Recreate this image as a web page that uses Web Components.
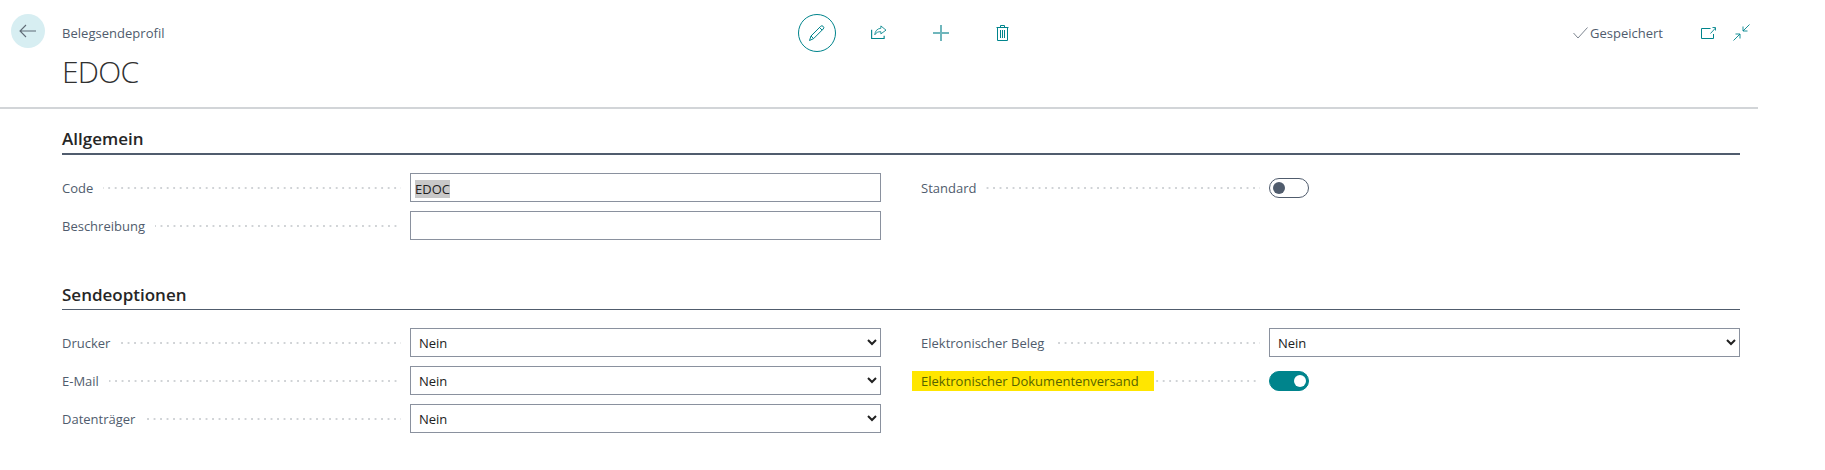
<!DOCTYPE html>
<html lang="de"><head><meta charset="utf-8"><title>EDOC</title>
<style>
html,body{margin:0;background:#fff}
body{font:13px "Open Sans",sans-serif;color:#212121;width:1825px;height:470px;overflow:hidden}
</style></head><body>
<bc-page>
  <bc-header slot="header" caption="Belegsendeprofil" title-text="EDOC"></bc-header>
  <bc-section heading="Allgemein" strong>
    <bc-column>
      <bc-field label="Code"><bc-input value="EDOC"></bc-input></bc-field>
      <bc-field label="Beschreibung"><bc-input></bc-input></bc-field>
    </bc-column>
    <bc-column>
      <bc-field label="Standard"><bc-toggle></bc-toggle></bc-field>
    </bc-column>
  </bc-section>
  <bc-section heading="Sendeoptionen">
    <bc-column>
      <bc-field label="Drucker"><bc-select></bc-select></bc-field>
      <bc-field label="E-Mail"><bc-select></bc-select></bc-field>
      <bc-field label="Datenträger"><bc-select></bc-select></bc-field>
    </bc-column>
    <bc-column>
      <bc-field label="Elektronischer Beleg"><bc-select></bc-select></bc-field>
      <bc-field label="Elektronischer Dokumentenversand" marked><bc-toggle on></bc-toggle></bc-field>
    </bc-column>
  </bc-section>
</bc-page>
<script>
const def=(name,css,html)=>customElements.define(name,class extends HTMLElement{
  connectedCallback(){ if(this.shadowRoot) return;
    const r=this.attachShadow({mode:'open'});
    r.innerHTML='<style>'+css+'</style>'+(typeof html==='function'?html(this):html);
  }
});
const T='#00848c';
def('bc-page',`:host{display:block}
  .body{display:block;padding:0 0 0 62px;width:1678px}`,
  `<slot name="header"></slot><div class="body"><slot></slot></div>`);
const ic=(w,h,vb,inner)=>`<svg width="${w}" height="${h}" viewBox="${vb}" fill="none" stroke="${T}" stroke-width="1">${inner}</svg>`;
def('bc-header',`:host{display:block;height:109px;box-sizing:border-box;border-bottom:2px solid #d2d5d8;width:1758px}
  .row{display:flex;height:107px}
  .back{width:62px;flex:none;padding:14px 0 0 11px;box-sizing:border-box}
  .circle{width:34px;height:34px;border-radius:50%;background:#d7eef2;display:flex;align-items:center;justify-content:center}
  .title{width:736px;flex:none}
  .cap{font-size:13px;line-height:18px;color:#505c6d;margin-top:24px;letter-spacing:.03px}
  h1{margin:12px 0 0;font:300 30px/36px "Open Sans",sans-serif;color:#303030;letter-spacing:-.7px}
  .tools{display:flex;align-items:flex-start;flex:none;width:240px;padding-top:14px;box-sizing:border-box}
  .tool{height:38px;display:flex;align-items:center;justify-content:center;flex:none}
  .tool.edit{width:38px;border-radius:50%;border:1px solid ${T};box-sizing:border-box}
  .tool.sh{margin-left:19px;width:48px;padding-bottom:2px;box-sizing:border-box}
  .tool.pl{width:76px}
  .tool.tr{width:46px}
  .status{margin-left:auto;display:flex;align-items:center;height:38px;margin-top:14px;color:#505c6d;font-size:13px}
  .chk{margin-right:2px}
  .t{width:111px}
  .o{display:block;margin-right:17px}
  .c{display:block;margin-right:8px;margin-top:-1px}
  `,h=>`<div class="row">
   <div class="back"><div class="circle"><svg width="18" height="14" viewBox="0 0 18 14" fill="none" stroke="#5f6b76" stroke-width="1.1"><path d="M17 7H1M7 1 1 7l6 6"/></svg></div></div>
   <div class="title"><div class="cap">${h.getAttribute('caption')}</div><h1>${h.getAttribute('title-text')}</h1></div>
   <div class="tools">
     <div class="tool edit">${ic(18,18,'0 0 18 18','<path d="M1.500 16.500 3 12 12.600 2.400a1.800 1.800 0 0 1 2.600 0 1.800 1.800 0 0 1 0 2.600L5.600 14.600 1.500 16.500ZM3 12l2.600 2.600M11.500 3.500l2.600 2.600"/>')}</div>
     <div class="tool sh">${ic(16,14,'0 0 17 15','<path d="M.6 5v9.400h13.400v-3" stroke-width="1.200"/><path d="M10.500 1 16 5.500 10.500 9.500V7.200C7.500 7 5.600 8 4 10.500 4.300 6.500 6.500 3.800 10.500 3.500Z" stroke-width=".9"/>')}</div>
     <div class="tool pl"><svg width="16" height="16" viewBox="0 0 16 16" stroke="#6fb6bc" stroke-width="2"><path d="M8 0v16M0 8h16"/></svg></div>
     <div class="tool tr">${ic(13,16,'0 0 13 16','<path d="M.5 2.500h12M4.500 2.500V.5h4v2M1.500 2.500v13h10v-13M4.500 5v8M6.500 5v8M8.500 5v8"/>')}</div>
   </div>
   <div class="status">
     <svg class="chk" width="15" height="12" viewBox="0 0 15 12" fill="none" stroke="#7d8590" stroke-width="1"><path d="M.5 6l4.500 5L14.500.5"/></svg>
     <span class="t">Gespeichert</span>
     <svg class="o" width="15" height="12" viewBox="0 0 15 12" fill="none" stroke="${T}"><path d="M9.500 1.500H.5v10h12V7"/><path d="M9.500 6.500l5-5.500M11.500.5h3v3" stroke-width=".9"/></svg>
     <svg class="c" width="17" height="17" viewBox="0 0 17 17" fill="none" stroke="${T}" stroke-width=".9"><path d="M16.500.5 10 7M10 2.500V7h4.500M.5 16.500 7 10M7 14.500V10H2.500"/></svg>
   </div></div>`);
def('bc-section',`:host{display:block}
  .head{display:flex;align-items:flex-end;height:46px;border-bottom:1px solid #505c6d;font:600 17px/24px "Open Sans",sans-serif;color:#262626;width:1678px;box-sizing:border-box;padding-bottom:2px}
  :host([strong]) .head{border-bottom-width:2px}
  .grid{display:grid;grid-template-columns:819px 819px;column-gap:40px;padding-top:18px;box-sizing:border-box}
  :host([strong]) .grid{height:109px}`,
  h=>`<div class="head">${h.getAttribute('heading')}</div><div class="grid"><slot></slot></div>`);
def('bc-column',`:host{display:flex;flex-direction:column;gap:9px}`,`<slot></slot>`);
def('bc-field',`:host{display:flex;align-items:center;height:29px;color:#505c6d;font-size:13px}
  .lab{flex:none;white-space:nowrap}
  :host([marked]) .lab{background:#ffe600;color:#566300;margin-left:-9px;padding:0 15px 0 9px;line-height:20px}
  .dots{flex:1;height:2px;margin:0 9px 0 10px;background:radial-gradient(circle at 1px 1px,#d0d3d6 1px,transparent 1.2px) right center/6.5px 2px repeat-x}
  :host([marked]) .dots{margin-left:0}
  .ctl{flex:none;width:471px}`,
  h=>`<span class="lab">${h.getAttribute('label')}</span><span class="dots"></span><div class="ctl"><slot></slot></div>`);
def('bc-input',`:host{display:block;height:29px;box-sizing:border-box;border:1px solid #8a919e;padding:0 4px;line-height:27px;color:#212121;font-size:13px}
  span{background:#c8c8c8;display:inline-block;line-height:18px;vertical-align:middle}`,
  h=>h.getAttribute('value')?`<span>${h.getAttribute('value')}</span>`:'');
def('bc-select',`:host{display:block;height:29px}
  select{display:block;width:100%;height:29px;box-sizing:border-box;border:1px solid #8a919e;border-radius:0;background-color:#fff;color:#212121;font:13px "Open Sans",sans-serif;padding:0 4px;outline:0}`,
  `<select><option>Nein</option><option>Ja</option></select>`);
def('bc-toggle',`:host{display:block;width:40px;height:20px;box-sizing:border-box;border:1px solid #505c6d;border-radius:10px;position:relative;background:#fff}
  i{position:absolute;left:3px;top:3px;width:12px;height:12px;border-radius:50%;background:#505c6d}
  :host([on]){background:${T};border-color:${T}}
  :host([on]) i{left:auto;right:2px;background:#fff}`,`<i></i>`);
</script>
</body></html>
